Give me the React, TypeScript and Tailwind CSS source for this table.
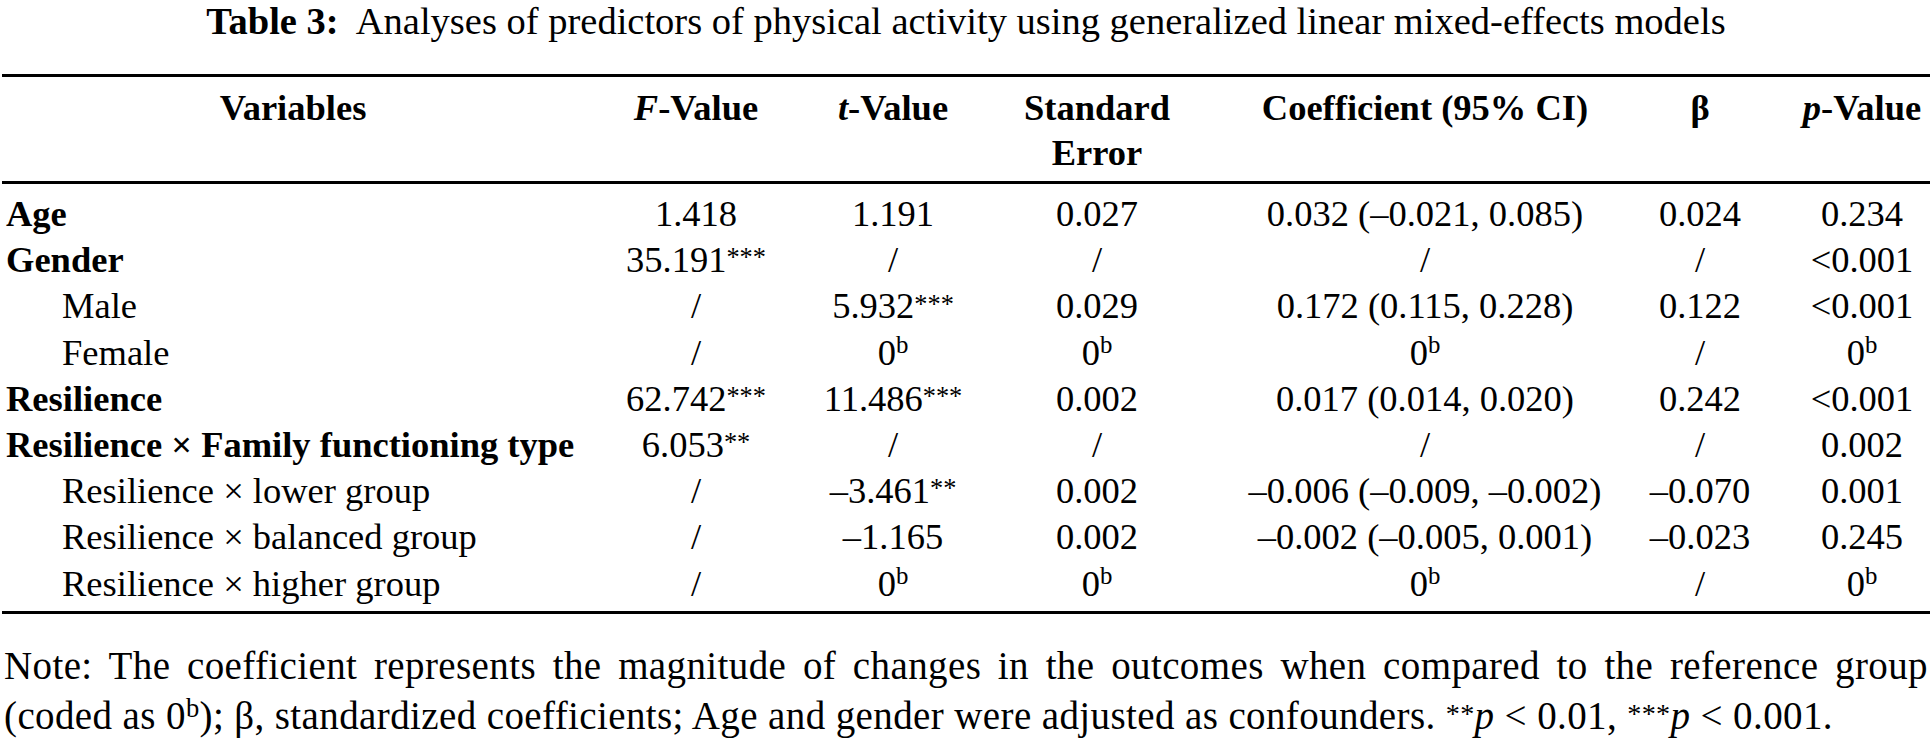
import React from "react";

type Cell = { v: string; sup?: string; star?: string };

const c = (v: string, star?: string): Cell => ({ v, star });
const zb: Cell = { v: "0", sup: "b" };
const sl: Cell = { v: "/" };

const rows: { label: string; bold?: boolean; indent?: boolean; cells: Cell[] }[] = [
  {
    label: "Age",
    bold: true,
    cells: [c("1.418"), c("1.191"), c("0.027"), c("0.032 (–0.021, 0.085)"), c("0.024"), c("0.234")],
  },
  {
    label: "Gender",
    bold: true,
    cells: [c("35.191", "***"), sl, sl, sl, sl, c("<0.001")],
  },
  {
    label: "Male",
    indent: true,
    cells: [sl, c("5.932", "***"), c("0.029"), c("0.172 (0.115, 0.228)"), c("0.122"), c("<0.001")],
  },
  {
    label: "Female",
    indent: true,
    cells: [sl, zb, zb, zb, sl, zb],
  },
  {
    label: "Resilience",
    bold: true,
    cells: [c("62.742", "***"), c("11.486", "***"), c("0.002"), c("0.017 (0.014, 0.020)"), c("0.242"), c("<0.001")],
  },
  {
    label: "Resilience × Family functioning type",
    bold: true,
    cells: [c("6.053", "**"), sl, sl, sl, sl, c("0.002")],
  },
  {
    label: "Resilience × lower group",
    indent: true,
    cells: [sl, c("–3.461", "**"), c("0.002"), c("–0.006 (–0.009, –0.002)"), c("–0.070"), c("0.001")],
  },
  {
    label: "Resilience × balanced group",
    indent: true,
    cells: [sl, c("–1.165"), c("0.002"), c("–0.002 (–0.005, 0.001)"), c("–0.023"), c("0.245")],
  },
  {
    label: "Resilience × higher group",
    indent: true,
    cells: [sl, zb, zb, zb, sl, zb],
  },
];

// column template: label, F, t, SE, Coef, beta, p
const grid = "grid grid-cols-[582px_224px_170px_238px_418px_132px_192px]";

function Value({ cell }: { cell: Cell }) {
  return (
    <span>
      {cell.v}
      {cell.sup && <span className="relative -top-[0.45em] text-[0.68em] leading-none">{cell.sup}</span>}
      {cell.star && <span className="relative -top-[0.22em] text-[0.72em] leading-none">{cell.star}</span>}
    </span>
  );
}

export default function App() {
  return (
    <div className="w-[1932px] h-[742px] overflow-hidden bg-white text-black font-['Liberation_Serif',serif]">
      <h1 className="text-center text-[38.5px] leading-[42px]">
        <span className="font-bold">Table 3:</span>&nbsp; Analyses of predictors of physical activity using generalized
        linear mixed-effects models
      </h1>

      <div className="mt-[32px] mx-[2px] border-t-[3px] border-black">
        <div className={`${grid} text-[36.5px] leading-[45px] font-bold text-center pt-[8px] pb-[6px]`}>
          <div>Variables</div>
          <div>
            <i>F</i>-Value
          </div>
          <div>
            <i>t</i>-Value
          </div>
          <div>
            Standard
            <br />
            Error
          </div>
          <div>Coefficient (95% CI)</div>
          <div>β</div>
          <div>
            <i>p</i>-Value
          </div>
        </div>

        <div className="border-t-[3px] border-black pt-[7px] pb-[4px]">
          {rows.map((r, i) => (
            <div key={i} className={`${grid} text-[36.5px] leading-[46.2px]`}>
              <div className={`${r.bold ? "font-bold pl-[4px]" : "pl-[60px]"} whitespace-nowrap`}>{r.label}</div>
              {r.cells.map((cell, j) => (
                <div key={j} className="text-center whitespace-nowrap">
                  <Value cell={cell} />
                </div>
              ))}
            </div>
          ))}
        </div>

        <div className="border-t-[3px] border-black" />
      </div>

      <div className="mt-[27px] px-[4px] text-[39px] leading-[50px] tracking-[0.01em]">
        <p className="text-justify [text-align-last:justify] whitespace-nowrap">
          Note: The coefficient represents the magnitude of changes in the outcomes when compared to the reference group
        </p>
        <p className="whitespace-nowrap">
          (coded as 0<span className="relative -top-[0.45em] text-[0.68em] leading-none">b</span>); β, standardized
          coefficients; Age and gender were adjusted as confounders.{" "}
          <span className="relative -top-[0.22em] text-[0.72em] leading-none">**</span>
          <i>p</i> &lt; 0.01, <span className="relative -top-[0.22em] text-[0.72em] leading-none">***</span>
          <i>p</i> &lt; 0.001.
        </p>
      </div>
    </div>
  );
}
